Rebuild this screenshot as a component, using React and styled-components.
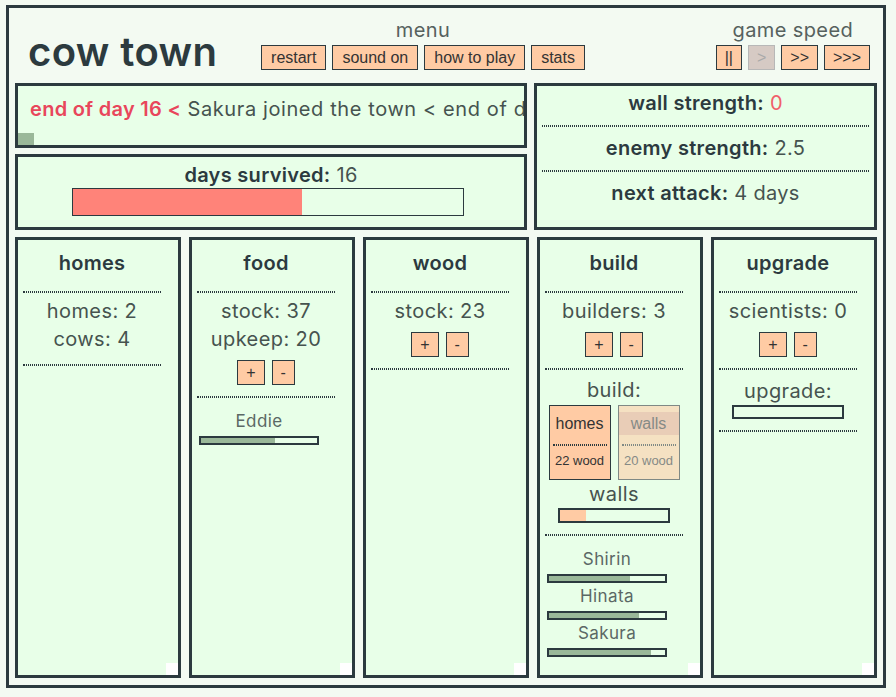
import React from "react";
import styled, { createGlobalStyle } from "styled-components";

const ink = "#2c3a3f";
const panel = "#e8ffe8";
const page = "#f3faf2";
const peach = "#ffcba4";
const text = "#46534f";
const red = "#e8465b";
const sage = "#9ab899";

const GlobalStyle = createGlobalStyle`
  body {
    margin: 0;
    background: ${page};
    font-family: Inter, "Open Sans", sans-serif;
    color: ${ink};
  }
`;

const workers = {
  food: [{ name: "Eddie", progress: 64 }],
  build: [
    { name: "Shirin", progress: 70 },
    { name: "Hinata", progress: 78 },
    { name: "Sakura", progress: 88 },
  ],
};

const App = () => {
  return (
    <>
      <GlobalStyle />
      <Frame>
        <Header>
          <Title>cow town</Title>
          <MenuBlock>
            <MenuLabel>menu</MenuLabel>
            <ButtonRow>
              <Btn>restart</Btn>
              <Btn>sound on</Btn>
              <Btn>how to play</Btn>
              <Btn>stats</Btn>
            </ButtonRow>
          </MenuBlock>
          <SpeedBlock>
            <MenuLabel>game speed</MenuLabel>
            <ButtonRow>
              <Btn $tight>||</Btn>
              <Btn $tight disabled>
                &gt;
              </Btn>
              <Btn $tight>&gt;&gt;</Btn>
              <Btn $tight>&gt;&gt;&gt;</Btn>
            </ButtonRow>
          </SpeedBlock>
        </Header>

        <Top>
          <LogPanel>
            <LogText>
              <Alert>end of day 16 &lt;</Alert> Sakura joined the town &lt; end
              of day 15
            </LogText>
            <LogTimer />
          </LogPanel>
          <DaysPanel>
            <StatLine>
              <Label>days survived:</Label> 16
            </StatLine>
            <DaysBar>
              <Fill $color="#ff8379" style={{ width: "58.6%" }} />
            </DaysBar>
          </DaysPanel>
          <StatsPanel>
            <StatLine>
              <Label>wall strength:</Label> <Danger>0</Danger>
            </StatLine>
            <PanelRule />
            <StatLine>
              <Label>enemy strength:</Label> 2.5
            </StatLine>
            <PanelRule />
            <StatLine>
              <Label>next attack:</Label> 4 days
            </StatLine>
          </StatsPanel>
        </Top>

        <Columns>
          <Column>
            <ColTitle>homes</ColTitle>
            <Rule />
            <Stat>homes: 2</Stat>
            <Stat>cows: 4</Stat>
            <Rule />
            <Corner />
          </Column>

          <Column>
            <ColTitle>food</ColTitle>
            <Rule />
            <Stat>stock: 37</Stat>
            <Stat>upkeep: 20</Stat>
            <Adjust>
              <Btn $tight>+</Btn>
              <Btn $tight>-</Btn>
            </Adjust>
            <Rule />
            <Workers>
              {workers.food.map((w) => (
                <Worker key={w.name}>
                  <WorkerName>{w.name}</WorkerName>
                  <WorkerBar>
                    <Fill $color={sage} style={{ width: `${w.progress}%` }} />
                  </WorkerBar>
                </Worker>
              ))}
            </Workers>
            <Corner />
          </Column>

          <Column>
            <ColTitle>wood</ColTitle>
            <Rule />
            <Stat>stock: 23</Stat>
            <Adjust>
              <Btn $tight>+</Btn>
              <Btn $tight>-</Btn>
            </Adjust>
            <Rule />
            <Corner />
          </Column>

          <Column>
            <ColTitle>build</ColTitle>
            <Rule />
            <Stat>builders: 3</Stat>
            <Adjust>
              <Btn $tight>+</Btn>
              <Btn $tight>-</Btn>
            </Adjust>
            <Rule />
            <SubHead $top={4}>build:</SubHead>
            <Options>
              <Option>
                <OptionName>homes</OptionName>
                <OptionRule />
                <OptionCost>22 wood</OptionCost>
              </Option>
              <Option $disabled>
                <OptionName $disabled>walls</OptionName>
                <OptionRule $disabled />
                <OptionCost>20 wood</OptionCost>
              </Option>
            </Options>
            <SubHead $top={2}>walls</SubHead>
            <ProgressBar $height={15}>
              <Fill $color={peach} style={{ width: "24%" }} />
            </ProgressBar>
            <Rule />
            <Workers>
              {workers.build.map((w) => (
                <Worker key={w.name}>
                  <WorkerName>{w.name}</WorkerName>
                  <WorkerBar>
                    <Fill $color={sage} style={{ width: `${w.progress}%` }} />
                  </WorkerBar>
                </Worker>
              ))}
            </Workers>
            <Corner />
          </Column>

          <Column>
            <ColTitle>upgrade</ColTitle>
            <Rule />
            <Stat>scientists: 0</Stat>
            <Adjust>
              <Btn $tight>+</Btn>
              <Btn $tight>-</Btn>
            </Adjust>
            <Rule />
            <SubHead $top={5}>upgrade:</SubHead>
            <ProgressBar $height={14} />
            <Rule />
            <Corner />
          </Column>
        </Columns>
      </Frame>
    </>
  );
};

const Frame = styled.div`
  box-sizing: border-box;
  width: 880px;
  height: 683px;
  margin: 5px 0 0 6px;
  border: 3px solid ${ink};
  padding: 0 6px 7px 6px;
  display: flex;
  flex-direction: column;
`;

const Header = styled.header`
  height: 75px;
  flex-shrink: 0;
  box-sizing: border-box;
  padding-top: 10px;
  display: grid;
  grid-template-columns: 247px 322px 1fr;
  align-items: start;
`;

const Title = styled.h1`
  margin: 14px 0 0 13px;
  font-size: 40px;
  line-height: 1;
  font-weight: 600;
  letter-spacing: 0.4px;
  white-space: nowrap;
  color: ${ink};
`;

const MenuBlock = styled.div`
  display: flex;
  flex-direction: column;
  align-items: center;
`;

const SpeedBlock = styled(MenuBlock)`
  justify-self: end;
  margin-right: 7px;
`;

const MenuLabel = styled.div`
  font-size: 20px;
  line-height: 24px;
  letter-spacing: 0.4px;
  color: #56615e;
`;

const ButtonRow = styled.div`
  display: flex;
  gap: 6px;
  margin-top: 3px;
`;

const Btn = styled.button`
  flex-shrink: 0;
  white-space: nowrap;
  height: 25px;
  padding: 0 ${(p) => (p.$tight ? 8 : 9)}px;
  border: 1px solid ${ink};
  background: ${peach};
  color: #333;
  font-family: "Liberation Sans", Arial, sans-serif;
  font-size: 16px;
  line-height: 1;
  border-radius: 0;
  cursor: pointer;

  &:disabled {
    background: #d6cac4;
    border-color: #b7b7b7;
    color: #a9a9a9;
    cursor: default;
  }
`;

const Top = styled.div`
  display: grid;
  grid-template-columns: 512px 343px;
  grid-template-rows: 65px 76px;
  column-gap: 7px;
  row-gap: 6px;
`;

const Box = styled.section`
  box-sizing: border-box;
  border: 3px solid ${ink};
  background: ${panel};
  min-width: 0;
`;

const LogPanel = styled(Box)`
  display: flex;
  flex-direction: column;
  padding-top: 11px;
  overflow: hidden;
`;

const LogText = styled.div`
  padding: 0 12px;
  white-space: nowrap;
  overflow: hidden;
  font-size: 20px;
  line-height: 24px;
  letter-spacing: 0.6px;
  color: ${text};
`;

const Alert = styled.span`
  color: ${red};
  font-weight: 600;
  letter-spacing: 0.3px;
`;

const LogTimer = styled.div`
  margin-top: auto;
  width: 16px;
  height: 12px;
  background: ${sage};
`;

const DaysPanel = styled(Box)`
  padding-top: 6px;
  text-align: center;
`;

const StatsPanel = styled(Box)`
  grid-column: 2;
  grid-row: 1 / span 2;
  padding-top: 5px;
  text-align: center;
`;

const StatLine = styled.div`
  font-size: 20px;
  line-height: 24px;
  letter-spacing: 0.3px;
  color: ${text};
`;

const Label = styled.span`
  font-weight: 600;
  color: ${ink};
`;

const Danger = styled.span`
  color: #f0606a;
`;

const DaysBar = styled.div`
  box-sizing: border-box;
  width: 392px;
  height: 28px;
  margin: 1px 0 0 54px;
  border: 1px solid ${ink};
  display: flex;
`;

const Fill = styled.div`
  height: 100%;
  background: ${(p) => p.$color};
`;

const dotted = `
  height: 0;
  flex-shrink: 0;
  border-top: 1px dotted ${ink};
  border-bottom: 1px dotted ${ink};
`;

const PanelRule = styled.div`
  ${dotted}
  margin: 10px 5px 9px;
`;

const Columns = styled.div`
  flex: 1;
  margin-top: 7px;
  display: grid;
  grid-template-columns: repeat(5, 166px);
  column-gap: 8px;
`;

const Column = styled(Box)`
  position: relative;
  display: flex;
  flex-direction: column;
  padding: 11px 17px 0 5px;
  text-align: center;
`;

const ColTitle = styled.h2`
  margin: 0 0 5px;
  font-size: 20px;
  line-height: 24px;
  font-weight: 600;
  letter-spacing: 0.3px;
  color: ${ink};
`;

const Rule = styled.div`
  ${dotted}
  margin: 11px 0 4px;
`;

const Stat = styled.div`
  font-size: 20px;
  line-height: 28px;
  letter-spacing: 0.4px;
  color: ${text};
`;

const Adjust = styled.div`
  display: flex;
  justify-content: center;
  gap: 7px;
  margin-top: 7px;
`;

const SubHead = styled.div`
  margin-top: ${(p) => p.$top}px;
  font-size: 20px;
  line-height: 24px;
  letter-spacing: 0.4px;
  color: ${text};
`;

const Options = styled.div`
  display: flex;
  justify-content: center;
  gap: 7px;
  margin-top: 3px;
`;

const Option = styled.div`
  box-sizing: border-box;
  width: 62px;
  height: 75px;
  padding-top: 6px;
  border: 1px solid ${(p) => (p.$disabled ? "#7f8985" : ink)};
  background: ${(p) => (p.$disabled ? "#f5e1c2" : peach)};
  color: ${(p) => (p.$disabled ? "#858a86" : "#333")};
  font-family: "Liberation Sans", Arial, sans-serif;
`;

const OptionName = styled.div`
  font-size: 16px;
  line-height: 23px;
  background: ${(p) => (p.$disabled ? "#e9cdb7" : "transparent")};
`;

const OptionRule = styled.div`
  ${dotted}
  border-color: ${(p) => (p.$disabled ? "#7f8985" : ink)};
  margin: 9px 3px 0;
`;

const OptionCost = styled.div`
  margin-top: 7px;
  font-size: 13px;
  line-height: 16px;
`;

const ProgressBar = styled.div`
  box-sizing: border-box;
  width: 112px;
  height: ${(p) => p.$height}px;
  flex-shrink: 0;
  margin: 2px auto 0;
  border: 2px solid ${ink};
  display: flex;
`;

const Workers = styled.div`
  padding-top: 8px;
`;

const Worker = styled.div`
  width: 120px;
  margin: 0 0 2px 2px;
`;

const WorkerName = styled.div`
  font-size: 17px;
  line-height: 22px;
  letter-spacing: 0.4px;
  color: #5b6865;
`;

const WorkerBar = styled.div`
  box-sizing: border-box;
  height: 9px;
  margin-top: 4px;
  border: 2px solid ${ink};
  background: ${panel};
  display: flex;
`;

const Corner = styled.div`
  position: absolute;
  right: 0;
  bottom: 0;
  width: 12px;
  height: 12px;
  background: #fff;
`;

export default App;
